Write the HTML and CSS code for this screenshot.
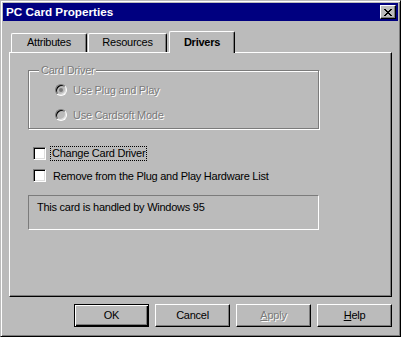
FILE: index.html
```html
<!DOCTYPE html>
<html>
<head>
<meta charset="utf-8">
<link rel="stylesheet" href="styles.css">
</head>
<body>
<div class="window">
  <div class="titlebar">
    <span class="title">PC Card Properties</span>
    <div class="close">
      <svg width="8" height="7" viewBox="0 0 8 7" shape-rendering="crispEdges">
        <path d="M0 0h2v1H0zM6 0h2v1H6zM1 1h2v1H1zM5 1h2v1H5zM2 2h4v1H2zM3 3h2v1H3zM2 4h4v1H2zM1 5h2v1H1zM5 5h2v1H5zM0 6h2v1H0zM6 6h2v1H6z" fill="#000"/>
      </svg>
    </div>
  </div>
  <div class="tabs">
    <div class="tab tab-attr">Attributes</div>
    <div class="tab tab-res">Resources</div>
    <div class="tab tab-drv selected">Drivers</div>
  </div>
  <div class="panel">
    <div class="group">
      <span class="legend disabled">Card Driver</span>
      <div class="radio-row">
        <span class="radio checked"></span>
        <span class="disabled">Use Plug and Play</span>
      </div>
      <div class="radio-row">
        <span class="radio"></span>
        <span class="disabled">Use Cardsoft Mode</span>
      </div>
    </div>
    <div class="check-row first">
      <span class="checkbox"></span>
      <span class="check-label focus">Change Card Driver</span>
    </div>
    <div class="check-row">
      <span class="checkbox"></span>
      <span class="check-label">Remove from the Plug and Play Hardware List</span>
    </div>
    <div class="static">This card is handled by Windows 95</div>
  </div>
  <div class="buttons">
    <div class="btn default">OK</div>
    <div class="btn">Cancel</div>
    <div class="btn disabled-btn"><span class="disabled"><u>A</u>pply</span></div>
    <div class="btn"><span><u>H</u>elp</span></div>
  </div>
</div>
</body>
</html>
```

FILE: styles.css
```css
html, body {
  margin: 0;
  padding: 0;
  background: #ffffff;
}

body {
  font-family: "Liberation Sans", Arial, sans-serif;
  font-size: 11px;
  letter-spacing: -0.25px;
  color: #000;
}

.window {
  box-sizing: border-box;
  width: 401px;
  height: 337px;
  background: #bbbbbb;
  border: 1px solid;
  border-color: #bbbbbb #000 #000 #bbbbbb;
  box-shadow: inset 1px 1px #fff, inset -1px -1px #7b7b7b;
  padding: 2px;
  display: flex;
  flex-direction: column;
}

.titlebar {
  height: 18px;
  background: #000080;
  display: flex;
  align-items: center;
  justify-content: space-between;
  padding: 0 2px 0 3px;
}

.title {
  color: #fff;
  font-weight: bold;
  font-size: 11.7px;
  letter-spacing: 0;
  line-height: 18px;
}

.close {
  box-sizing: border-box;
  width: 16px;
  height: 14px;
  background: #bbbbbb;
  border: 1px solid;
  border-color: #fff #000 #000 #fff;
  box-shadow: inset -1px -1px #7b7b7b;
  display: flex;
  align-items: center;
  justify-content: center;
  padding-right: 1px;
}

.close svg {
  display: block;
}

.tabs {
  display: flex;
  align-items: flex-end;
  height: 19px;
  margin-top: 12px;
  padding-left: 8px;
  position: relative;
  z-index: 1;
}

.tab {
  box-sizing: border-box;
  height: 19px;
  border: 1px solid;
  border-color: #fff #000 transparent #fff;
  border-bottom: none;
  border-radius: 2px 2px 0 0;
  box-shadow: inset -1px 0 #7b7b7b;
  text-align: center;
  line-height: 17px;
  background: #bbbbbb;
}

.tab-attr {
  width: 76px;
}

.tab-res {
  width: 79px;
  margin-left: 1px;
}

.tab-drv {
  width: 66px;
  margin-left: 2px;
}

.tab.selected {
  height: 22px;
  margin-bottom: -1px;
  font-weight: bold;
  line-height: 20px;
  padding-bottom: 1px;
}

.panel {
  box-sizing: border-box;
  height: 245px;
  margin: 0 6px;
  border: 1px solid;
  border-color: #fff #000 #000 #fff;
  box-shadow: inset -1px -1px #7b7b7b;
  display: flex;
  flex-direction: column;
  align-items: flex-start;
}

.disabled {
  color: #7b7b7b;
  text-shadow: 1px 1px 0 #fff;
}

.group {
  position: relative;
  box-sizing: border-box;
  width: 291px;
  height: 59px;
  margin: 17px 0 0 18px;
  border: 1px solid #7b7b7b;
  box-shadow: inset 1px 1px #fff, 1px 1px #fff;
  padding: 12px 0 0 26px;
  display: flex;
  flex-direction: column;
  gap: 12px;
}

.legend {
  position: absolute;
  top: -7px;
  left: 10px;
  padding: 0 2px;
  background: #bbbbbb;
  line-height: 13px;
}

.radio-row {
  display: flex;
  align-items: center;
  height: 13px;
  gap: 6px;
}

.radio {
  box-sizing: border-box;
  width: 12px;
  height: 12px;
  border-radius: 50%;
  border: 1px solid;
  border-color: #7b7b7b #fff #fff #7b7b7b;
  box-shadow: inset 1px 1px #000, inset -1px -1px #dedede;
  background: #bbbbbb;
  display: flex;
  align-items: center;
  justify-content: center;
}

.radio.checked::after {
  content: "";
  width: 4px;
  height: 4px;
  border-radius: 50%;
  background: #7b7b7b;
}

.check-row {
  display: flex;
  align-items: center;
  height: 17px;
  margin: 5px 0 0 23px;
}

.check-row.first {
  margin-top: 16px;
}

.checkbox {
  box-sizing: border-box;
  width: 13px;
  height: 13px;
  background: #fff;
  border: 1px solid;
  border-color: #7b7b7b #fff #fff #7b7b7b;
  box-shadow: inset 1px 1px #000, inset -1px -1px #dedede;
}

.check-label {
  margin-left: 5px;
  padding: 1px 1px 0 2px;
  line-height: 13px;
}

.check-label.focus {
  margin-left: 4px;
  border: 1px dotted #000;
  padding: 0 1px 0 1px;
}

.static {
  box-sizing: border-box;
  width: 291px;
  height: 35px;
  margin: 11px 0 0 18px;
  border: 1px solid;
  border-color: #7b7b7b #fff #fff #7b7b7b;
  padding: 5px 8px;
  line-height: 13px;
}

.buttons {
  display: flex;
  justify-content: flex-end;
  gap: 6px;
  margin-top: 7px;
  padding-right: 6px;
}

.btn {
  box-sizing: border-box;
  width: 75px;
  height: 23px;
  border: 1px solid;
  border-color: #fff #000 #000 #fff;
  box-shadow: inset -1px -1px #7b7b7b;
  display: flex;
  align-items: center;
  justify-content: center;
  line-height: 13px;
}

.btn.default {
  border-color: #000;
  box-shadow: inset 1px 1px #fff, inset -1px -1px #000, inset -2px -2px #7b7b7b;
}
```
